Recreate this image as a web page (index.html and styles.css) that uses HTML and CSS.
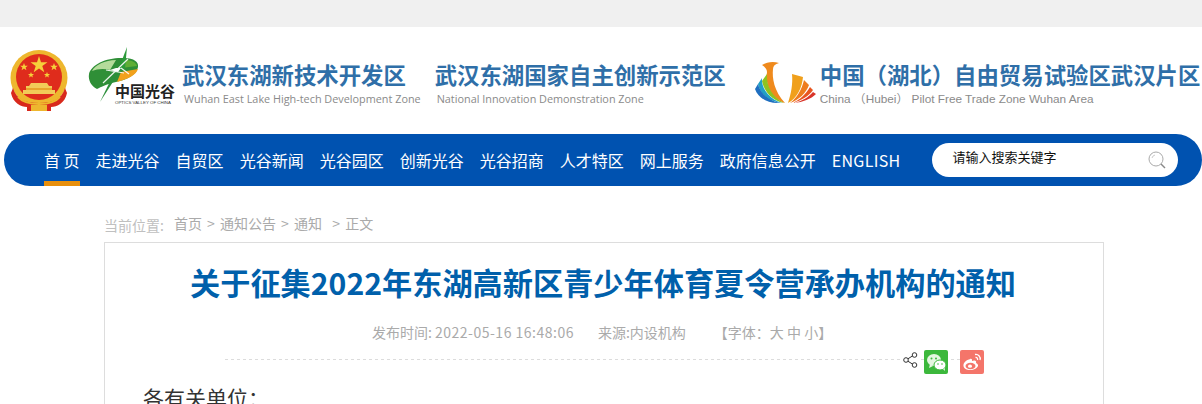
FILE: index.html
```html
<!DOCTYPE html>
<html lang="zh-CN">
<head>
<meta charset="utf-8">
<title>关于征集2022年东湖高新区青少年体育夏令营承办机构的通知</title>
<link rel="stylesheet" href="styles.css">
</head>
<body>
<div class="topbar"></div>
<header class="head">
  <svg class="emblem" viewBox="0 0 58 62" width="58" height="62">
    <ellipse cx="29" cy="28" rx="28.500" ry="28" fill="#eeb72e"/>
    <ellipse cx="29" cy="27" rx="23" ry="23" fill="#df2c1c"/>
    <path d="M29 6l2 6.200h6.500l-5.200 3.800 2 6.200-5.300-3.800-5.300 3.800 2-6.200-5.200-3.800H27z" fill="#f6d03a"/>
    <path d="M14 13l1 2.700 2.800.1-2.200 1.700.8 2.700-2.400-1.600-2.400 1.600.8-2.700-2.200-1.700 2.800-.1zM44 13l1 2.700 2.800.1-2.200 1.700.8 2.700-2.400-1.600-2.400 1.600.8-2.700-2.200-1.700 2.800-.1zM21 22l.8 2 2.200.1-1.700 1.300.6 2.100-1.900-1.200-1.900 1.200.6-2.100-1.700-1.300 2.200-.1zM37 22l.8 2 2.200.1-1.700 1.300.6 2.100-1.900-1.200-1.900 1.200.6-2.100-1.700-1.300 2.200-.1z" fill="#f6d03a"/>
    <path d="M21 33h16l2 3h3v2H16v-2h3zM13 40h32v4H13z" fill="#f2cb58"/>
    <path d="M16 38h26v2H16z" fill="#e8a52c"/>
    <path d="M3 38c3 11 12 15 26 15s23-4 26-15l2 5c-2 10-10 14-16 14v4H17v-4C11 57 3 53 1 43z" fill="#d8291c"/>
    <path d="M21 55h16v6H21z" fill="#eeb72e"/>
    <path d="M8 47c4 5 12 7 21 7s17-2 21-7" fill="none" stroke="#eeb72e" stroke-width="1.800"/>
  </svg>
  <div class="ovc">
    <svg class="ovc-mark" viewBox="0 0 60 58" width="60" height="58">
      <path d="M1 27C3 17 20 10 36 11c10 0 15 4 14 9-1 8-12 13-22 15-9 2-15 5-19 7C3 39 0 33 1 27z" fill="#2f8f37"/>
      <path d="M4 24c3-6 13-11 24-11l-6 10C15 21 9 22 4 24z" fill="#b5dc9b"/>
      <path d="M37 13c6 0 11 2 12 6l-16 2z" fill="#5fae35"/>
      <path d="M33 25l17-3c-2 6-10 10-21 13z" fill="#f2a11c"/>
      <path d="M39 0l-8 21 6 1z" fill="#2b9a3a"/>
      <path d="M27 24l-15 31 18-28z" fill="#2b8f3a"/>
      <path d="M22 23l8 2 3-4-5 0z" fill="#fff"/>
      <path d="M15 36L40 12M33 21l8 6M18 23l18 3" stroke="#fff" stroke-width="1.200" fill="none" opacity=".9"/>
    </svg>
    <span class="ovc-cn">中国光谷</span>
    <span class="ovc-en">OPTICS VALLEY OF CHINA</span>
  </div>
  <div class="zone zone-a">
    <strong class="zone-cn">武汉东湖新技术开发区</strong>
    <span class="zone-en">Wuhan East Lake High-tech Development Zone</span>
  </div>
  <div class="zone zone-b">
    <strong class="zone-cn">武汉东湖国家自主创新示范区</strong>
    <span class="zone-en">National Innovation Demonstration Zone</span>
  </div>
  <svg class="phoenix" viewBox="0 0 62 44" width="62" height="44">
    <path d="M7 4C12 1 18 0 24 2c-4 1-6 3-6 6-1 9 1 22 12 34C17 38 10 25 12 11c0-3-2-5-5-7z" fill="#ef8a1d"/>
    <path d="M12 13c-1 12 6 24 17 29C18 40 9 31 7 20z" fill="#8fc31f"/>
    <path d="M7 17C6 27 14 38 27 42 14 41 5 33 3 23z" fill="#21a0c4"/>
    <path d="M3 23c2 9 11 17 22 19C13 43 3 37 0 28z" fill="#1f6fc0"/>
    <path d="M37 13l11 3c-1 11-6 21-15 26 3-9 5-19 4-29z" fill="#f0a01c"/>
    <path d="M49 19l5 5c-3 8-10 15-19 18 7-5 12-14 14-23z" fill="#ee7c1e"/>
    <path d="M55 26l3 3c-4 6-12 11-21 13 8-3 14-9 18-16z" fill="#e8541e"/>
    <path d="M58 31l3 2c-5 5-13 8-22 9 8-2 15-6 19-11z" fill="#d9352a"/>
  </svg>
  <div class="zone zone-c">
    <strong class="zone-cn">中国<span class="paren">（</span>湖北<span class="paren">）</span>自由贸易试验区武汉片区</strong>
    <span class="zone-en">China （Hubei） Pilot Free Trade Zone Wuhan Area</span>
  </div>
</header>
<nav class="nav">
  <a class="nav-item is-current">首 页</a>
  <a class="nav-item">走进光谷</a>
  <a class="nav-item">自贸区</a>
  <a class="nav-item">光谷新闻</a>
  <a class="nav-item">光谷园区</a>
  <a class="nav-item">创新光谷</a>
  <a class="nav-item">光谷招商</a>
  <a class="nav-item">人才特区</a>
  <a class="nav-item">网上服务</a>
  <a class="nav-item">政府信息公开</a>
  <a class="nav-item nav-en">ENGLISH</a>
  <div class="search">
    <span class="search-text">请输入搜索关键字</span>
    <svg class="search-icon" viewBox="0 0 18 18" width="18" height="18">
      <circle cx="8" cy="8" r="7" fill="none" stroke="#aaa" stroke-width="1"/>
      <path d="M4 7a4 4 0 0 1 3-3" fill="none" stroke="#ccc"/>
      <path d="M13 13l4 4" stroke="#888" stroke-width="1.500"/>
    </svg>
  </div>
</nav>
<main class="wrap">
  <div class="crumbs">
    <span class="crumb-label">当前位置:</span>
    <span class="crumb-path">首页 &gt; 通知公告 &gt; 通知&nbsp; &gt; 正文</span>
  </div>
  <article class="card">
    <h1 class="title">关于征集2022年东湖高新区青少年体育夏令营承办机构的通知</h1>
    <div class="meta">
      <span>发布时间: <span class="meta-date">2022-05-16 16:48:06</span></span>
      <span>来源:内设机构</span>
      <span class="meta-size">【字体：大 中 小】</span>
    </div>
    <div class="share">
      <svg class="share-icon" viewBox="0 0 15 16" width="15" height="16">
        <g fill="#fff" stroke="#333" stroke-width="1">
          <path d="M3 8l8-5M3 8l8 5" fill="none"/>
          <circle cx="3" cy="8" r="2.300"/>
          <circle cx="11.500" cy="3" r="2.300"/>
          <circle cx="11.500" cy="13" r="2.300"/>
        </g>
      </svg>
      <svg class="share-btn" viewBox="0 0 24 24" width="24" height="24">
        <rect width="24" height="24" rx="2" fill="#3cb83c"/>
        <ellipse cx="10" cy="10" rx="7" ry="6" fill="#e4f6e0"/>
        <path d="M6 14l-1 4 4-2z" fill="#e4f6e0"/>
        <ellipse cx="16" cy="15" rx="6" ry="5" fill="#fff" stroke="#3cb83c"/>
        <path d="M19 19l2 2-.5-3z" fill="#fff"/>
        <circle cx="7.500" cy="8.500" r="1" fill="#3cb83c"/>
        <circle cx="12" cy="8.500" r="1" fill="#3cb83c"/>
        <circle cx="14" cy="14" r=".8" fill="#3cb83c"/>
        <circle cx="18" cy="14" r=".8" fill="#3cb83c"/>
      </svg>
      <svg class="share-btn" viewBox="0 0 24 24" width="24" height="24">
        <rect width="24" height="24" rx="2" fill="#f4756a"/>
        <path d="M10.500 9C6 10 3 13 3.500 16c.5 3 4 4.500 8 4 4-.5 7-3 6.500-5-.3-1.400-1.700-1.600-2-2 .6-1.600-.2-2.700-2-2.500l-2 .5c.3-1.700-.5-2.700-2-2z" fill="#fff"/>
        <ellipse cx="10.500" cy="16" rx="5" ry="3.300" fill="#f4756a"/>
        <ellipse cx="10" cy="16.200" rx="2" ry="1.600" fill="#fff"/>
        <path d="M15 4.500c3-.7 6 2 5 5.500M15.500 7.500c1.500-.3 2.500 1 2 2.500" fill="none" stroke="#fff" stroke-width="1.300"/>
      </svg>
    </div>
    <p class="body-text">各有关单位：</p>
  </article>
</main>
</body>
</html>
```
FILE: styles.css
```css
* { box-sizing: border-box; }
html, body { margin: 0; height: 404px; overflow: hidden; background: #fff; }
body { font-family: "Noto Sans CJK SC", "Liberation Sans", sans-serif; }

.topbar { height: 27px; background: #f0f0f0; }

.head { height: 107px; display: flex; align-items: flex-start; padding-left: 10px; }
.emblem { margin-top: 23px; flex: none; }
.ovc { position: relative; width: 90px; height: 60px; margin: 20px 0 0 20px; flex: none; }
.ovc-mark { display: block; }
.ovc-cn { position: absolute; left: 27px; top: 36px; font-size: 15px; line-height: 16px; font-weight: 700; color: #222; white-space: nowrap; }
.ovc-en { position: absolute; left: 27px; top: 53px; font-size: 4.400px; line-height: 5px; color: #333; white-space: nowrap; font-family: "Liberation Sans", sans-serif; }

.zone { display: flex; flex-direction: column; flex: none; margin-top: 32px; }
.zone-cn { font-size: 22.400px; line-height: 30px; font-weight: 700; color: #2f6fa8; white-space: nowrap; }
.paren { font-family: "Noto Sans CJK TC", sans-serif; }
.zone-en { font-family: "Open Sans", "Noto Sans CJK SC", sans-serif; font-size: 10.850px; line-height: 14px; margin: 3px 0 0 2px; color: #8a8a8a; white-space: nowrap; }
.zone-a { margin-left: 4px; }
.zone-b { margin-left: 14px; }
.phoenix { flex: none; margin: 34px 0 0 29px; }
.zone-c { margin-left: 3px; }
.zone-c .zone-en { font-family: "Liberation Sans", "Noto Sans CJK SC", sans-serif; font-size: 11.800px; margin-left: 0; }

.nav { height: 52px; margin-left: 4px; padding-left: 40px; display: flex; align-items: stretch; gap: 16px; background: #0052b0; border-radius: 26px; }
.nav-item { font-size: 16px; line-height: 52px; color: #fff; white-space: nowrap; }
.nav-en { letter-spacing: .3px; }
.is-current { border-bottom: 5px solid #e88f0c; }
.search { width: 246px; height: 34px; margin: 9px 0 0 16px; padding: 0 12px 0 20px; display: flex; align-items: center; justify-content: space-between; background: #fff; border-radius: 17px; flex: none; }
.search-text { font-size: 13px; line-height: 28px; margin-bottom: 6px; color: #111; }
.search-icon { flex: none; }

.wrap { width: 1000px; margin-left: 104px; }
.crumbs { height: 56px; padding-top: 26px; display: flex; gap: 10px; font-size: 14px; line-height: 22px; color: #aaa; }
.crumb-label { color: #c0c0c0; padding-top: 2px; }
.crumb-path { word-spacing: 2px; }

.card { height: 300px; border: 1px solid #ddd; }
.title { margin: 19px 0 0; padding-right: 2px; font-size: 30.200px; line-height: 40px; font-weight: 700; color: #0060ab; text-align: center; white-space: nowrap; }
.meta { display: flex; gap: 24px; margin: 20px 0 0 267px; font-size: 14px; line-height: 20px; color: #aaa; white-space: nowrap; }
.meta-date { letter-spacing: .5px; }
.meta-size { margin-left: 4px; }
.share { display: flex; align-items: flex-start; width: 759px; height: 24px; margin: 8px 0 0 120px; justify-content: flex-end; gap: 12px; background: linear-gradient(to right, #dcdcdc 50%, transparent 0) 0 9px / 6px 1px repeat-x; }
.share-icon { margin: 2px -6px 0 0; background: #fff; }
.body-text { margin: 6px 0 0 38px; font-size: 21px; line-height: 34px; color: #333; }
```
